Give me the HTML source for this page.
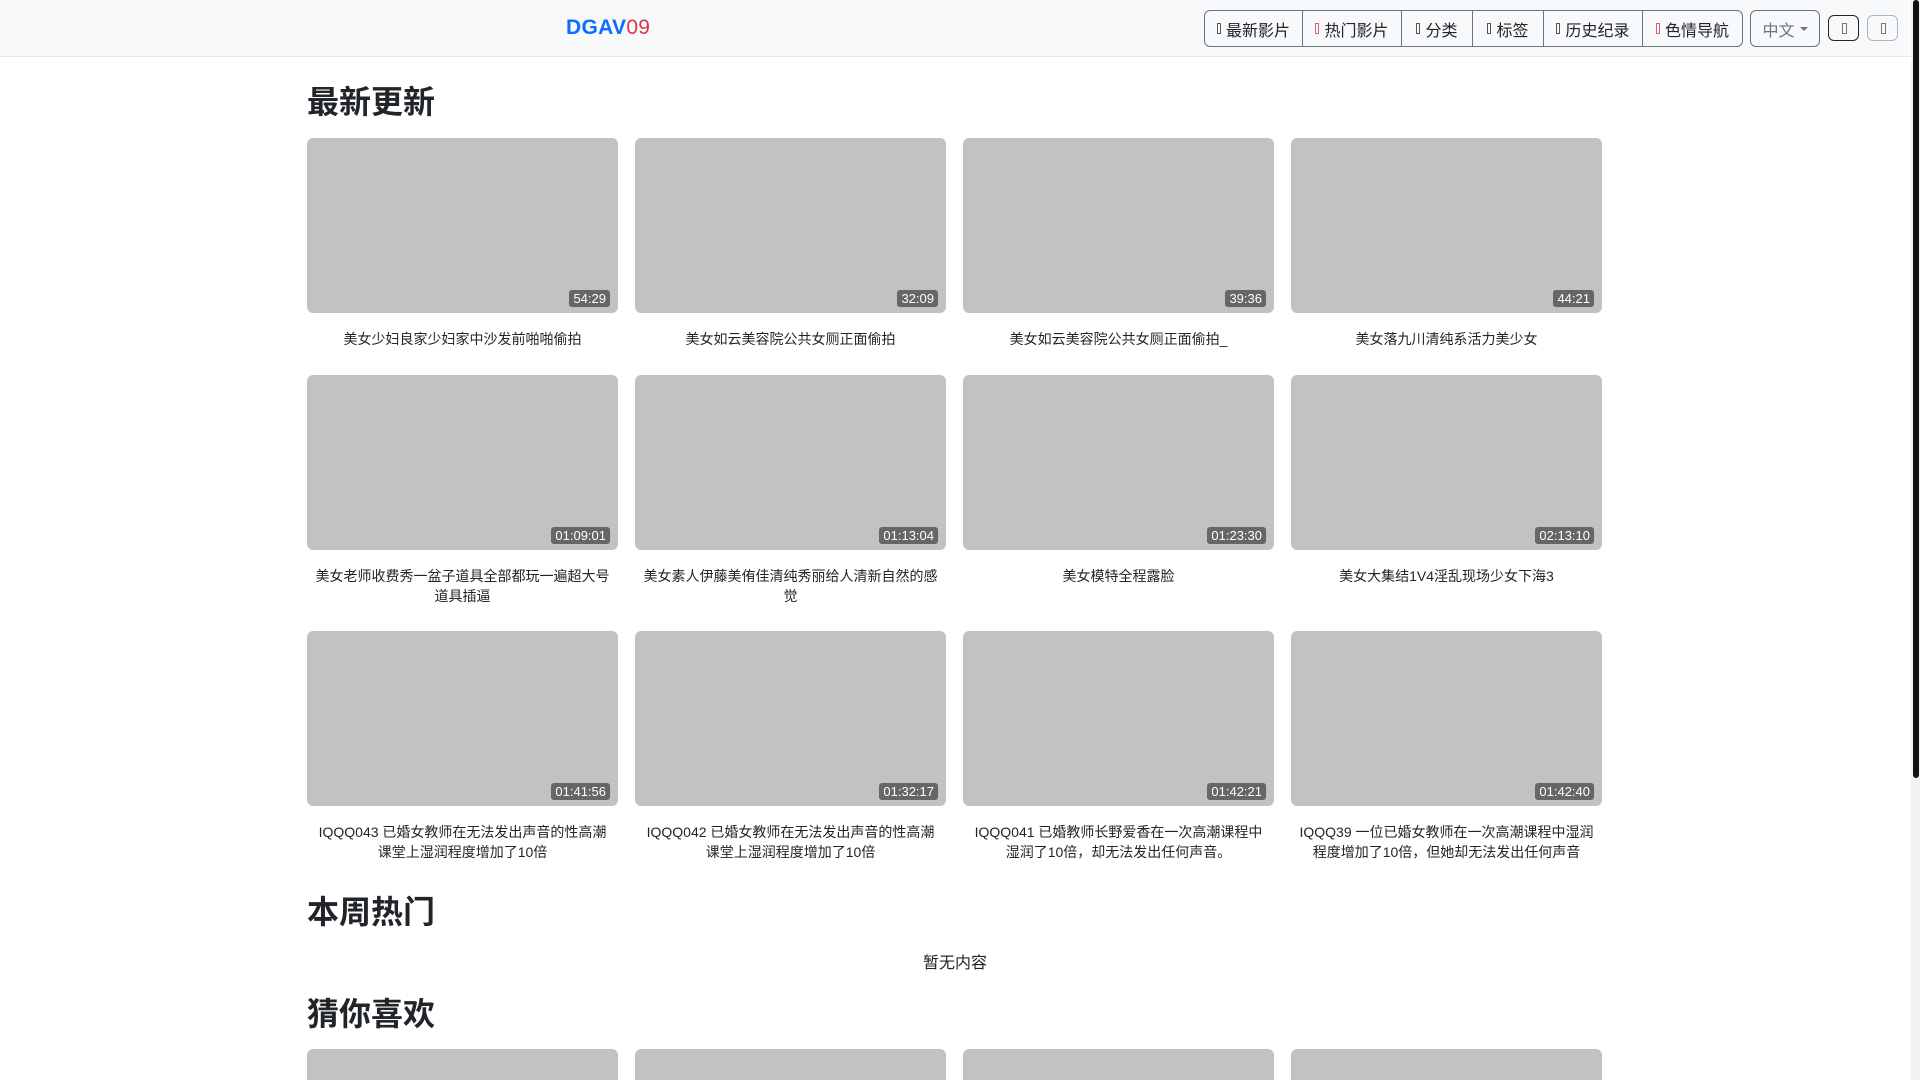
<!DOCTYPE html>
<html><head><meta charset="utf-8"><style>
*{box-sizing:border-box;margin:0;padding:0}
html,body{width:1920px;height:1080px;overflow:hidden;background:#fff;font-family:"Liberation Sans","Noto Sans CJK SC",sans-serif;color:#212529;position:relative}
.nav{position:absolute;left:0;top:0;width:1911px;height:57px;background:#f8f9fa;border-bottom:1px solid #e6e7e8}
.logo{position:absolute;left:566px;top:16px;font-size:21px;font-weight:bold;color:#0d6efd;letter-spacing:.3px}
.logo span{color:#dc3545;font-weight:normal}
.grp{position:absolute;left:1204px;top:10px;height:37px;display:flex;border:1px solid #6c757d;border-radius:6px;overflow:hidden}
.grp div{height:100%;border-right:1px solid #6c757d;display:flex;align-items:center;justify-content:center;font-size:16px}
.grp div:last-child{border-right:0}
.ic{display:inline-block;width:4px;height:11px;border:1px solid #555;margin-right:5px}
.r{border-color:#e35d6a}
.lang{position:absolute;left:1750px;top:10px;width:70px;height:37px;border:1px solid #6c757d;border-radius:6px;color:#6c757d;font-size:16px;display:flex;align-items:center;justify-content:center}
.lang:after{content:"";border:4px solid transparent;border-top-color:#6c757d;margin:4px 0 0 5px}
.sb{position:absolute;top:15px;width:31px;height:26px;border:1px solid #212529;border-radius:6px}
.sb:after{content:"";position:absolute;left:13px;top:7px;width:3px;height:9px;border:1px solid #777}
.scroll{position:absolute;right:0;top:0;width:9px;height:1080px;background:#f1f1f1}
.scroll div{position:absolute;left:2px;top:0;width:6px;height:778px;background:#111;border-radius:3px}
.wrap{position:absolute;left:307px;width:1296px}
h2{font-size:32px;font-weight:bold;line-height:40px}
.grid{display:grid;grid-template-columns:repeat(4,311px);column-gap:17px;align-items:start}
.th{height:175px;background:#c2c2c2;border-radius:6px;position:relative}
.d{position:absolute;right:8px;bottom:6px;background:#666;color:#fff;font-size:13px;line-height:17px;padding:0 4px;border-radius:3px}
.t{font-size:14px;line-height:20px;text-align:center;padding:16px 8px 0}
</style></head><body>
<div class="nav">
<div class="logo">DGAV<span>09</span></div>
<div class="grp">
<div style="width:98px"><i class="ic"></i>最新影片</div>
<div style="width:99px"><i class="ic r"></i>热门影片</div>
<div style="width:71px"><i class="ic"></i>分类</div>
<div style="width:71px"><i class="ic"></i>标签</div>
<div style="width:99px"><i class="ic"></i>历史纪录</div>
<div style="width:99px"><i class="ic r"></i>色情导航</div>
</div>
<div class="lang">中文</div>
<div class="sb" style="left:1828px"></div>
<div class="sb" style="left:1867px;border-color:#adb5bd"></div>
</div>
<div class="scroll"><div></div></div>
<div class="wrap" style="top:82px"><h2>最新更新</h2></div>
<div class="wrap grid" style="top:138px">
<div><div class="th"><span class="d">54:29</span></div><div class="t">美女少妇良家少妇家中沙发前啪啪偷拍</div></div>
<div><div class="th"><span class="d">32:09</span></div><div class="t">美女如云美容院公共女厕正面偷拍</div></div>
<div><div class="th"><span class="d">39:36</span></div><div class="t">美女如云美容院公共女厕正面偷拍_</div></div>
<div><div class="th"><span class="d">44:21</span></div><div class="t">美女落九川清纯系活力美少女</div></div>
</div>
<div class="wrap grid" style="top:375px">
<div><div class="th"><span class="d">01:09:01</span></div><div class="t">美女老师收费秀一盆子道具全部都玩一遍超大号道具插逼</div></div>
<div><div class="th"><span class="d">01:13:04</span></div><div class="t">美女素人伊藤美侑佳清纯秀丽给人清新自然的感觉</div></div>
<div><div class="th"><span class="d">01:23:30</span></div><div class="t">美女模特全程露脸</div></div>
<div><div class="th"><span class="d">02:13:10</span></div><div class="t">美女大集结1V4淫乱现场少女下海3</div></div>
</div>
<div class="wrap grid" style="top:631px">
<div><div class="th"><span class="d">01:41:56</span></div><div class="t">IQQQ043 已婚女教师在无法发出声音的性高潮课堂上湿润程度增加了10倍</div></div>
<div><div class="th"><span class="d">01:32:17</span></div><div class="t">IQQQ042 已婚女教师在无法发出声音的性高潮课堂上湿润程度增加了10倍</div></div>
<div><div class="th"><span class="d">01:42:21</span></div><div class="t">IQQQ041 已婚教师长野爱香在一次高潮课程中湿润了10倍，却无法发出任何声音。</div></div>
<div><div class="th"><span class="d">01:42:40</span></div><div class="t">IQQQ39 一位已婚女教师在一次高潮课程中湿润程度增加了10倍，但她却无法发出任何声音</div></div>
</div>
<div class="wrap" style="top:892px"><h2>本周热门</h2></div>
<div class="wrap" style="top:949px;text-align:center;font-size:16px">暂无内容</div>
<div class="wrap" style="top:994px"><h2>猜你喜欢</h2></div>
<div class="wrap grid" style="top:1049px;height:31px;overflow:hidden"><div class="th"></div><div class="th"></div><div class="th"></div><div class="th"></div></div>
</body></html>
